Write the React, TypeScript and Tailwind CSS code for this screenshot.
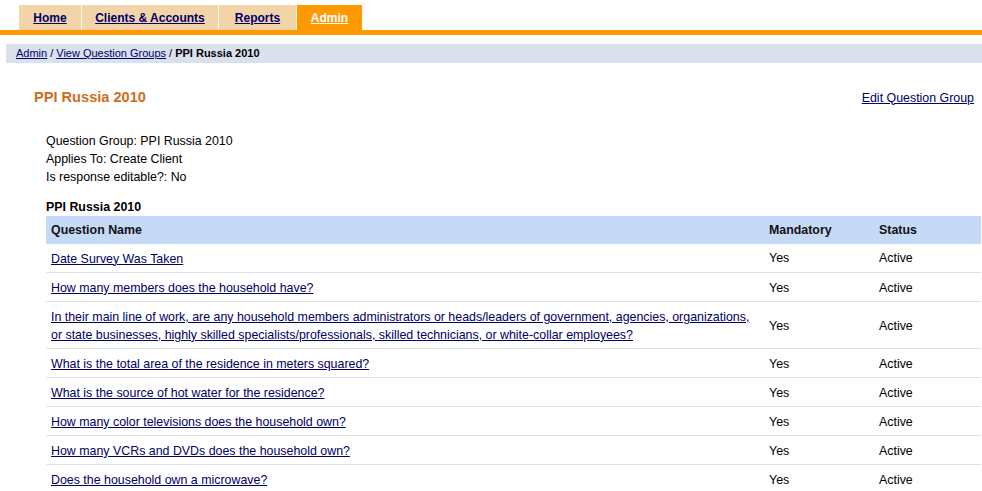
const rows: { q: string[] }[] = [
  { q: ["Date Survey Was Taken"] },
  { q: ["How many members does the household have?"] },
  {
    q: [
      "In their main line of work, are any household members administrators or heads/leaders of government, agencies, organizations,",
      "or state businesses, highly skilled specialists/professionals, skilled technicians, or white-collar employees?",
    ],
  },
  { q: ["What is the total area of the residence in meters squared?"] },
  { q: ["What is the source of hot water for the residence?"] },
  { q: ["How many color televisions does the household own?"] },
  { q: ["How many VCRs and DVDs does the household own?"] },
  { q: ["Does the household own a microwave?"] },
];

const tabs = ["Home", "Clients & Accounts", "Reports", "Admin"];
const tabWidths = ["w-[63px]", "w-[137px]", "w-[78px]", "w-[66px]"];

export default function App() {
  return (
    <div className="h-[491px] w-[982px] overflow-hidden bg-white font-['Liberation_Sans',Arial,sans-serif] text-[12.4px] text-black">
      {/* top nav */}
      <div className="flex h-[30px] items-end pl-[19px]">
        {tabs.map((t, i) => (
          <div
            key={t}
            className={`flex h-[25px] items-center justify-center border-r border-[#fff7e6] text-[12px] font-bold underline ${tabWidths[i]} ${
              t === "Admin" ? "bg-[#ff9900] text-white" : "bg-[#f3d3a8] text-[#000066]"
            }`}
          >
            {t}
          </div>
        ))}
      </div>
      <div className="h-[5px] bg-[#ff9900]" />

      {/* breadcrumb */}
      <div className="ml-[6px] mt-[9px] flex h-[19px] items-center bg-[#d9e0ee] pl-[10px] text-[11px]">
        <a className="text-[#000066] underline">Admin</a>
        <span className="px-[3px]">/</span>
        <a className="text-[#000066] underline">View Question Groups</a>
        <span className="px-[3px]">/</span>
        <span className="font-bold">PPI Russia 2010</span>
      </div>

      {/* title row */}
      <div className="mt-[24px] flex items-center justify-between pl-[34px] pr-[8px]">
        <h1 className="text-[14.6px] font-bold text-[#cc6e1a]">PPI Russia 2010</h1>
        <a className="text-[#000066] underline">Edit Question Group</a>
      </div>

      {/* info */}
      <div className="mt-[23px] pl-[46px] leading-[18px]">
        <div>Question Group: PPI Russia 2010</div>
        <div>Applies To: Create Client</div>
        <div>Is response editable?: No</div>
      </div>

      <div className="mt-[14px] pl-[46px]">
        <div className="font-bold leading-[15px]">PPI Russia 2010</div>
        <table className="mt-[1px] w-[935px] border-collapse text-left">
          <thead>
            <tr className="h-[28px] bg-[#c6daf8]">
              <th className="pl-[5px] font-bold text-[#111]">Question Name</th>
              <th className="w-[111px] pl-[1px] font-bold text-[#111]">Mandatory</th>
              <th className="w-[102px] font-bold text-[#111]">Status</th>
            </tr>
          </thead>
          <tbody>
            {rows.map((r, i) => (
              <tr key={i} className={`border-b border-[#dde1e4] ${r.q.length > 1 ? "h-[47px]" : "h-[29px]"}`}>
                <td className="pl-[5px] pt-[1px] leading-[18px]">
                  {r.q.map((line, j) => (
                    <div key={j}>
                      <a className="text-[#000066] underline">{line}</a>
                    </div>
                  ))}
                </td>
                <td className="pl-[1px] pt-[1px]">Yes</td>
                <td className="pt-[1px]">Active</td>
              </tr>
            ))}
          </tbody>
        </table>
      </div>
    </div>
  );
}
